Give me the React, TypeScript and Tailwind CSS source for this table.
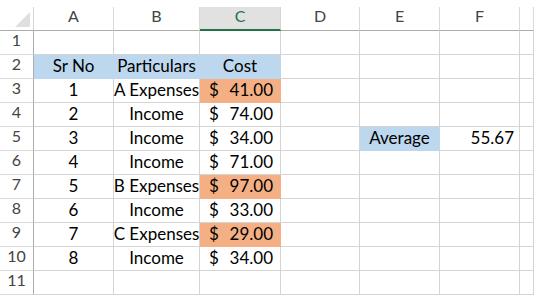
import React from 'react';

type Cell = {
  text?: string;
  align?: 'center' | 'right';
  fill?: 'blue' | 'orange';
  money?: boolean;
};

const cols = ['A', 'B', 'C', 'D', 'E', 'F', ''];

const money = (v: string): Cell => ({ text: v, money: true });
const orange = (v: string): Cell => ({ text: v, money: true, fill: 'orange' });
const c = (v: string): Cell => ({ text: v, align: 'center' });

const rows: Cell[][] = [
  [],
  [
    { text: 'Sr No', align: 'center', fill: 'blue' },
    { text: 'Particulars', align: 'center', fill: 'blue' },
    { text: 'Cost', align: 'center', fill: 'blue' },
  ],
  [c('1'), c('A Expenses'), orange('41.00')],
  [c('2'), c('Income'), money('74.00')],
  [c('3'), c('Income'), money('34.00'), {}, { text: 'Average', align: 'center', fill: 'blue' }, { text: '55.67', align: 'right' }],
  [c('4'), c('Income'), money('71.00')],
  [c('5'), c('B Expenses'), orange('97.00')],
  [c('6'), c('Income'), money('33.00')],
  [c('7'), c('C Expenses'), orange('29.00')],
  [c('8'), c('Income'), money('34.00')],
  [],
];

function DataCell({ cell }: { cell?: Cell }) {
  const fill =
    cell?.fill === 'blue'
      ? 'bg-[#bdd7ee] border-[#bdd7ee]'
      : cell?.fill === 'orange'
        ? 'bg-[#f4b084] border-[#f4b084]'
        : 'bg-white border-[#d4d4d4]';

  // accounting format: $ pinned left, amount pinned right
  if (cell?.money) {
    return (
      <div className={`h-6 border-r border-b ${fill} flex items-end justify-between pl-[9px] pr-[7px] pb-[2px] leading-5 text-black`}>
        <span>$</span>
        <span>{cell.text}</span>
      </div>
    );
  }

  const align = cell?.align === 'right' ? 'justify-end pr-[5px]' : 'justify-center';
  return (
    <div className={`h-6 border-r border-b ${fill} flex items-end pb-[2px] leading-5 text-black ${align}`}>
      <span className="whitespace-nowrap">{cell?.text}</span>
    </div>
  );
}

export default function App() {
  return (
    <div className="w-[534px] h-[296px] bg-white overflow-hidden pt-[7px] font-['Lato',sans-serif] text-[17px]">
      <div className="grid grid-cols-[34px_80px_86px_81px_79px_80px_80px_1fr]">
        {/* Column headers */}
        <div className="h-6 border-r border-b border-r-[#d4d4d4] border-b-[#ababab] relative">
          <div className="absolute right-[3px] bottom-[3px] w-0 h-0 border-l-[15px] border-l-transparent border-b-[15px] border-b-[#dfdfdf]" />
        </div>
        {cols.map((col) =>
          col === 'C' ? (
            <div
              key={col}
              className="h-6 border-r border-r-[#d4d4d4] border-b-2 border-b-[#217346] bg-[#e1e1e1] flex items-end justify-center pb-[3px] leading-5 text-[16px] text-[#217346]"
            >
              {col}
            </div>
          ) : (
            <div
              key={col || 'G'}
              className="h-6 border-r border-b border-r-[#dadada] border-b-[#ababab] flex items-end justify-center pb-[4px] leading-5 text-[16px] text-[#444]"
            >
              {col}
            </div>
          )
        )}

        {/* Rows */}
        {rows.map((row, i) => (
          <React.Fragment key={i}>
            <div className="h-6 border-r border-b border-r-[#ababab] border-b-[#dadada] flex items-end justify-center pb-[4px] leading-5 text-[16px] text-[#444]">
              {i + 1}
            </div>
            {cols.map((_, j) => (
              <DataCell key={j} cell={row[j]} />
            ))}
          </React.Fragment>
        ))}
      </div>
    </div>
  );
}
